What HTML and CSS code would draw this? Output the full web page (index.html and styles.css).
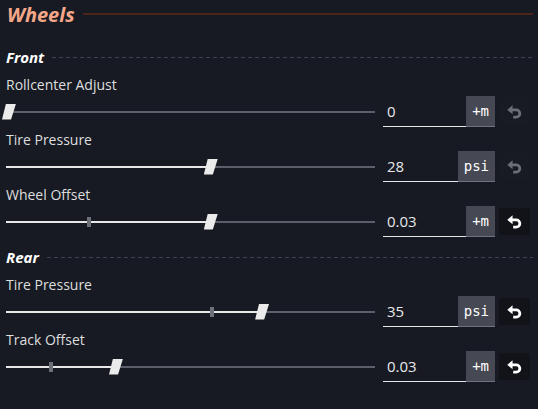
FILE: index.html
```html
<!DOCTYPE html>
<html>
<head>
<meta charset="utf-8">
<link rel="stylesheet" href="styles.css">
</head>
<body>
<div class="panel">
  <div class="title"><span>Wheels</span></div>

  <div class="group-header"><span>Front</span></div>

  <div class="setting">
    <div class="label">Rollcenter Adjust</div>
    <div class="control">
      <div class="slider"><div class="track"><div class="fill" style="width:0%"></div><div class="thumb" style="left:0%"></div></div></div>
      <div class="value-box"><div class="value">0</div><div class="unit">+m</div></div>
      <button class="reset disabled"><svg width="15" height="14" viewBox="0 0 14 13"><path d="M0.3 4.5 L5.2 0.3 V8.7 Z" fill="currentColor"/><path d="M4.5 4.5 H8.6 A3.4 3.4 0 0 1 8.6 11.3 H5.8" fill="none" stroke="currentColor" stroke-width="2.6"/></svg></button>
    </div>
  </div>

  <div class="setting">
    <div class="label">Tire Pressure</div>
    <div class="control">
      <div class="slider"><div class="track"><div class="fill" style="width:54.7%"></div><div class="thumb" style="left:54.7%"></div></div></div>
      <div class="value-box"><div class="value">28</div><div class="unit">psi</div></div>
      <button class="reset disabled"><svg width="15" height="14" viewBox="0 0 14 13"><path d="M0.3 4.5 L5.2 0.3 V8.7 Z" fill="currentColor"/><path d="M4.5 4.5 H8.6 A3.4 3.4 0 0 1 8.6 11.3 H5.8" fill="none" stroke="currentColor" stroke-width="2.6"/></svg></button>
    </div>
  </div>

  <div class="setting">
    <div class="label">Wheel Offset</div>
    <div class="control">
      <div class="slider"><div class="track"><div class="fill" style="width:54.7%"></div><div class="tick" style="left:22.5%"></div><div class="thumb" style="left:54.7%"></div></div></div>
      <div class="value-box"><div class="value">0.03</div><div class="unit">+m</div></div>
      <button class="reset"><svg width="15" height="14" viewBox="0 0 14 13"><path d="M0.3 4.5 L5.2 0.3 V8.7 Z" fill="currentColor"/><path d="M4.5 4.5 H8.6 A3.4 3.4 0 0 1 8.6 11.3 H5.8" fill="none" stroke="currentColor" stroke-width="2.6"/></svg></button>
    </div>
  </div>

  <div class="group-header rear"><span>Rear</span></div>

  <div class="setting">
    <div class="label">Tire Pressure</div>
    <div class="control">
      <div class="slider"><div class="track"><div class="fill" style="width:68.6%"></div><div class="tick" style="left:55.8%"></div><div class="thumb" style="left:68.6%"></div></div></div>
      <div class="value-box"><div class="value">35</div><div class="unit">psi</div></div>
      <button class="reset"><svg width="15" height="14" viewBox="0 0 14 13"><path d="M0.3 4.5 L5.2 0.3 V8.7 Z" fill="currentColor"/><path d="M4.5 4.5 H8.6 A3.4 3.4 0 0 1 8.6 11.3 H5.8" fill="none" stroke="currentColor" stroke-width="2.6"/></svg></button>
    </div>
  </div>

  <div class="setting">
    <div class="label">Track Offset</div>
    <div class="control">
      <div class="slider"><div class="track"><div class="fill" style="width:29%"></div><div class="tick" style="left:12.2%"></div><div class="thumb" style="left:29%"></div></div></div>
      <div class="value-box"><div class="value">0.03</div><div class="unit">+m</div></div>
      <button class="reset"><svg width="15" height="14" viewBox="0 0 14 13"><path d="M0.3 4.5 L5.2 0.3 V8.7 Z" fill="currentColor"/><path d="M4.5 4.5 H8.6 A3.4 3.4 0 0 1 8.6 11.3 H5.8" fill="none" stroke="currentColor" stroke-width="2.6"/></svg></button>
    </div>
  </div>
</div>
</body>
</html>
```

FILE: styles.css
```css
html, body {
  margin: 0;
  background: #171a23;
}
body {
  font-family: "Open Sans", "Noto Sans", sans-serif;
  height: 409px;
  overflow: hidden;
}
.panel {
  padding: 2px 5px 0 6px;
}
.title {
  display: flex;
  align-items: center;
  height: 24px;
  font-size: 20px;
  font-weight: 700;
  font-style: italic;
  color: #f3a788;
}
.title span {
  margin-left: 1px;
}
.title::after {
  content: "";
  flex: 1;
  height: 2px;
  background: #4b2517;
  margin-left: 8px;
}
.group-header {
  display: flex;
  align-items: center;
  height: 22px;
  margin-top: 20px;
  font-size: 15px;
  font-weight: 700;
  font-style: italic;
  color: #ffffff;
}
.group-header.rear {
  margin-top: 9px;
}
.group-header::after {
  content: "";
  flex: 1;
  height: 1px;
  margin-left: 8px;
  background: repeating-linear-gradient(90deg, #3e4351 0 4px, transparent 4px 7px);
}
.setting {
  margin-top: 3px;
}
.group-header + .setting {
  margin-top: 7px;
}
.label {
  height: 20px;
  line-height: 20px;
  font-size: 14px;
  color: #dedede;
}
.control {
  display: flex;
  align-items: center;
  height: 31px;
  margin-top: 1px;
  margin-right: 3px;
}
.slider {
  flex: 1;
  display: flex;
  align-items: center;
  height: 31px;
}
.track {
  flex: 1;
  height: 2px;
  background: #5c5f69;
  position: relative;
}
.fill {
  position: absolute;
  left: 0;
  top: 0;
  bottom: 0;
  background: #e8e8e8;
}
.tick {
  position: absolute;
  top: -4px;
  width: 4px;
  height: 10px;
  margin-left: -2px;
  background: #6d7079;
}
.thumb {
  position: absolute;
  top: -7px;
  width: 14px;
  height: 16px;
  margin-left: -4px;
  background: #ebebeb;
  clip-path: polygon(4px 0, 14px 0, 9px 16px, 0 16px);
}
.value-box {
  display: flex;
  width: 112px;
  height: 31px;
  margin-left: 8px;
}
.value {
  flex: 1;
  display: flex;
  align-items: center;
  padding-left: 4px;
  box-sizing: border-box;
  border-bottom: 1px solid #e6e6e6;
  font-size: 15px;
  color: #e8e8e8;
}
.unit {
  display: flex;
  align-items: center;
  padding: 0 6px;
  background: #464953;
  border-bottom: 1px solid #70737c;
  font-family: "DejaVu Sans Mono", monospace;
  font-size: 14px;
  color: #ffffff;
}
.reset {
  width: 31px;
  height: 27px;
  margin-left: 4px;
  padding: 0;
  border: 0;
  border-radius: 2px;
  background: #111318;
  color: #ffffff;
  display: flex;
  align-items: center;
  justify-content: center;
}
.reset.disabled {
  background: #181b22;
  color: #6b6e75;
}
```
